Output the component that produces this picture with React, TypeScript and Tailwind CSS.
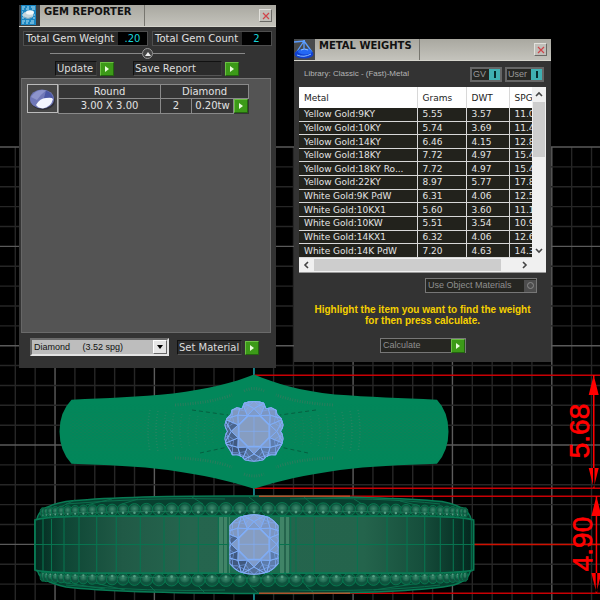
import React from "react";

const metals: [string, string, string, string][] = [
  ["Yellow Gold:9KY", "5.55", "3.57", "11.08"],
  ["Yellow Gold:10KY", "5.74", "3.69", "11.45"],
  ["Yellow Gold:14KY", "6.46", "4.15", "12.88"],
  ["Yellow Gold:18KY", "7.72", "4.97", "15.41"],
  ["Yellow Gold:18KY Ro...", "7.72", "4.97", "15.40"],
  ["Yellow Gold:22KY", "8.97", "5.77", "17.89"],
  ["White Gold:9K PdW", "6.31", "4.06", "12.58"],
  ["White Gold:10KX1", "5.60", "3.60", "11.17"],
  ["White Gold:10KW", "5.51", "3.54", "10.99"],
  ["White Gold:14KX1", "6.32", "4.06", "12.61"],
  ["White Gold:14K PdW", "7.20", "4.63", "14.37"],
];

const verdana = "font-['DejaVu_Sans',sans-serif]";
const arial = "font-['Liberation_Sans',sans-serif]";

/* ---------- viewport drawing ---------- */

const polar = (r: number, deg: number): [number, number] => [
  r * Math.cos((deg * Math.PI) / 180),
  r * Math.sin((deg * Math.PI) / 180),
];
const poly = (...p: [number, number][]) => p.map((q) => q.map((v) => v.toFixed(1)).join(",")).join(" ");

const ROUND_CLIP =
  "M-30-86Q0-96 30-86L37-69L52-72L68-64L70-52L82-40L89-20Q88-8 81 0Q88 8 89 22L84 40L70 62L66 72L50 72L37 77L28 87Q0 95-28 87L-37 77L-50 72L-66 72L-70 62L-84 40L-89 22Q-88 8-81 0Q-88-8-89-20L-82-40L-70-52L-68-64L-52-72L-37-69Z";
const BARREL_CLIP = "M-74-56Q-60-73-45-82Q0-99 45-82Q60-73 74-56V58Q60 75 45 83Q0 100-45 83Q-60 75-74 58Z";

function Gem({ id, cx, cy, outline }: { id: string; cx: number; cy: number; outline: string }) {
  const shades = ["#7e9ac6", "#5d7cab", "#55719b", "#40597f", "#4b658d", "#8098c0", "#87a3d4", "#7c96c2"];
  return (
    <g transform={`translate(${cx} ${cy}) scale(0.3333)`}>
      <clipPath id={id}>
        <path d={outline} />
      </clipPath>
      <g clipPath={`url(#${id})`} stroke="#80aef8" strokeWidth="3" strokeLinejoin="round">
        <path d={outline} fill="#6985b4" />
        {shades.map((fill, k) => {
          const a = k * 45;
          const t0 = polar(51, a - 22.5);
          const t1 = polar(51, a + 22.5);
          const star = polar(68, a);
          const g0 = polar(96, a - 22.5);
          const g1 = polar(96, a + 22.5);
          const gm = polar(96, a);
          return (
            <g key={k}>
              <polygon points={poly(star, g0, gm, g1)} fill={fill} />
              <polygon points={poly(t0, star, g0)} fill={fill} />
              <polygon points={poly(t1, star, g1)} fill={fill} />
              <polygon points={poly(t0, star, t1)} fill="#7f9bc9" />
              <polyline
                points={poly(polar(80, a - 22.5), polar(81, a - 8), polar(96, a + 3))}
                fill="none"
                strokeWidth="2"
              />
              <polyline
                points={poly(polar(80, a + 22.5), polar(81, a + 8), polar(96, a - 3))}
                fill="none"
                strokeWidth="2"
              />
              <polyline
                points={poly(polar(66, a - 22), polar(76, a - 12), polar(96, a - 10))}
                fill="none"
                strokeWidth="1.5"
              />
              <polyline
                points={poly(polar(66, a + 22), polar(76, a + 12), polar(96, a + 10))}
                fill="none"
                strokeWidth="1.5"
              />
            </g>
          );
        })}
        <polygon
          points={poly(...([0, 1, 2, 3, 4, 5, 6, 7].map((k) => polar(49, k * 45 + 22.5)) as [number, number][]))}
          fill="#869dc1"
          strokeWidth="4"
        />
        <path d="M-46 0H46M0-46V46" strokeWidth="2" />
        <path d={outline} fill="none" strokeWidth="6" />
      </g>
    </g>
  );
}

function BeadRow({ y, dir }: { y: number; dir: 1 | -1 }) {
  const beads = [];
  for (let i = -21; i <= 21; i++) {
    const th = i * 0.0655;
    const s = Math.cos(th);
    const cx = 254 + 215 * Math.sin(th);
    const cy = y + dir * 4 * (1 - s);
    beads.push(
      <g key={i}>
        <ellipse cx={cx} cy={cy} rx={2 + 5 * s} ry={4 + 2.5 * s} fill="#0f543e" stroke="#077a50" strokeWidth="0.9" />
        <ellipse cx={cx} cy={cy - 1} rx={1 + 4 * s} ry={2 + 2 * s} fill="url(#bead)" />
        <path d={`M${cx - 7 * s} ${cy + dir * 2}h${14 * s}`} stroke="#2a7f61" strokeWidth="1" opacity="0.7" />
        <circle cx={cx} cy={cy + dir * 3} r={0.6 + 0.8 * s} fill="#56a085" />
      </g>
    );
  }
  return <g>{beads}</g>;
}

const range = (n: number) => Array.from({ length: n }, (_, i) => i);

function Viewport() {
  const bandLines = [
    43, 51.5, 64, 79, 96.7, 116.3, 140.3, 164, 179.3, 198.3, 218.3, 290.7, 296, 314.3, 357.3, 387, 407, 424.7, 440.3,
    453.3, 463.3, 471.3,
  ];
  return (
    <svg
      className="absolute inset-0 h-full w-full"
      viewBox="0 0 600 600"
      preserveAspectRatio="xMinYMin slice"
      role="img"
      aria-label="Ring model, top and front views"
    >
      <defs>
        <linearGradient id="band">
          <stop offset="0" stopColor="#04291f" />
          <stop offset="0.06" stopColor="#0d4534" />
          <stop offset="0.2" stopColor="#205a46" />
          <stop offset="0.35" stopColor="#25654e" />
          <stop offset="0.75" stopColor="#24644c" />
          <stop offset="0.88" stopColor="#164f3c" />
          <stop offset="1" stopColor="#03271e" />
        </linearGradient>
        <radialGradient id="bead">
          <stop offset="0" stopColor="#3f8a6e" />
          <stop offset="1" stopColor="#17624a" />
        </radialGradient>
        <pattern id="weave" width="4" height="3" patternUnits="userSpaceOnUse">
          <path d="M0 .5h2M2 2h2" stroke="#1d7a56" strokeWidth="0.6" />
        </pattern>
        <linearGradient id="fade" x1="0" x2="0" y1="0" y2="1">
          <stop offset="0" stopColor="#fff" stopOpacity="0" />
          <stop offset="0.4" stopColor="#fff" />
          <stop offset="1" stopColor="#fff" stopOpacity="0" />
        </linearGradient>
        <mask id="weaveMask">
          <rect x="70" y="404" width="370" height="56" fill="url(#fade)" />
        </mask>
      </defs>
      <rect width="600" height="600" fill="#000" />
      {range(30).map((i) => {
        const x = 15.3 + i * 19.87;
        return <path key={i} d={`M${x} 147V600`} stroke={i % 5 === 2 ? "#5c5c5c" : "#262626"} strokeWidth="1.4" />;
      })}
      {range(23).map((i) => {
        const y = 147 + i * 19.87;
        return <path key={i} d={`M0 ${y}H600`} stroke={i % 5 === 0 ? "#5a5a5a" : "#262626"} strokeWidth="1.4" />;
      })}
      <path d="M254 366V600" stroke="#0b8b93" strokeWidth="1.6" />
      <path d="M254 375.3H600M254 488.3H600M254 496.3H600M254 593.3H600" stroke="#c80004" strokeWidth="1.4" />
      <path d="M472 544.5H600" stroke="#d01000" strokeWidth="1.6" />

      {/* ring, top view */}
      <path
        d="M254 374.5C275 383 300 391 335 394.5C370 397 400 398 437 399.7Q448.500 412 448.500 431.500T437 463.700C400 465 370 466 340 470C305 475 278 481 254 488.700C230 481 203 475 168 470C138 466 108 465 71.500 463.700Q59.500 451 59.500 431.500T71.500 399.700C108 398 138 397 173 393.500C208 389 233 383 254 374.500Z"
        fill="#02875a"
      />
      <rect x="70" y="404" width="370" height="56" fill="url(#weave)" mask="url(#weaveMask)" />
      {range(9).map((i) => (
        <g key={i} stroke="#2b8664" fill="none" strokeWidth="1.6" strokeDasharray="1 2" opacity={0.8 - i * 0.06}>
          <path d={`M${150 + i * 8} ${410 + i}q-4 20 0 ${42 - i * 2}`} />
          <path d={`M${358 - i * 8} ${410 + i}q4 20 0 ${42 - i * 2}`} />
        </g>
      ))}
      <g stroke="#327c5e" fill="none" strokeWidth="3" strokeDasharray="1 1.5" opacity="0.8">
        <path d="M175 405Q210 403 232 395M333 405Q298 403 276 395M175 458Q210 459 232 467M333 458Q298 459 276 467M244 391Q254 386 264 391M244 474Q254 478 264 474" />
      </g>
      <path
        d="M192 410L228 415M316 410L280 415M200 453L228 447M308 453L280 447"
        stroke="#055f40"
        strokeDasharray="4 3"
        fill="none"
      />
      <Gem id="gemTop" cx={254} cy={431.3} outline={ROUND_CLIP} />

      {/* ring, front view */}
      <path
        d="M37 519Q39 506 66 501.500Q120 495.500 254 496T442 501.500Q469 507 471 519L473.500 521V569L470 572Q467 584 443 587Q390 594 254 593.500T66 587Q40 581 38 572L35 569V521Z"
        fill="#07402f"
        stroke="#087b54"
        strokeWidth="1.4"
      />
      <path
        d="M75 500L52 511M112 499L86 505M138 499L122 504M192 497L203 504M249 497L258 504M304 497L312 504M354 499L362 504M400 501L420 506M60 582L105 589M95 583L125 590M150 586L156 592M198 586L205 593M250 586L258 593M306 586L314 593M374 590L420 583M66 504Q150 497 225 499M290 499Q380 497 440 504M66 585Q150 592 225 590M290 590Q380 592 440 585"
        stroke="#0b6e4c"
        fill="none"
      />
      <BeadRow y={509} dir={1} />
      <BeadRow y={580} dir={-1} />
      <path
        d="M35 520Q45 516.500 96 516.200H412Q462 516.500 473.500 520V570Q462 573 412 573.200H96Q45 573 35 570Z"
        fill="url(#band)"
        stroke="#087b54"
        strokeWidth="1.8"
      />
      <rect x="227" y="517" width="54" height="56" fill="#1c6c4e" />
      <path d="M219 517h4v56h-4zM224 517h3v56h-3zM229 517h1v56h-1zM280 517h4v56h-4zM286 517h3v56h-3z" fill="#408467" />
      <path
        d={bandLines.map((x) => `M${x} ${x < 60 || x > 450 ? 519 : 517}V${x < 60 || x > 450 ? 571 : 573}`).join("") + "M35 544.500H473"}
        stroke="#08734f"
        strokeWidth="1.1"
      />
      <Gem id="gemFront" cx={254} cy={544.3} outline={BARREL_CLIP} />
      <path d="M259 496.300H350M259 593.300H350" stroke="#b0522c" strokeWidth="1.4" />

      {/* dimensions */}
      <g fill="#f00">
        <path d="M593 375h1.500v113h-1.500zM593.700 375l5 20h-10zM593.700 488l5-20h-10z" />
        <path d="M595.700 496h1.500v97h-1.500zM596.400 496l5 20h-10zM596.400 593l5-20h-10z" />
        <g
          className="font-['Liberation_Sans',sans-serif]"
          fontSize="28"
          textAnchor="middle"
          stroke="#f00"
          strokeWidth="0.6"
        >
          <text transform="translate(589 431) rotate(-90)">5.68</text>
          <text transform="translate(592 544) rotate(-90)">4.90</text>
        </g>
      </g>
    </svg>
  );
}

/* ---------- window parts ---------- */

function TitleBar({ title, icon }: { title: string; icon: React.ReactNode }) {
  return (
    <header className="flex h-[22px] border-b border-[#d6d5cd] bg-linear-to-b from-[#a9a8a0] to-[#c4c3bc]">
      <div className="h-[21px] w-[21px] shrink-0 overflow-hidden">{icon}</div>
      <h1
        className={`w-[105px] shrink-0 border-r border-[#77766f] pl-1 text-[10px] leading-[13px] font-bold whitespace-nowrap text-[#111] ${verdana}`}
      >
        {title}
      </h1>
      <button
        type="button"
        aria-label={`Close ${title}`}
        className="mt-1 mr-1 ml-auto flex h-[13px] w-[13px] items-center justify-center border border-t-[#e2e1dc] border-r-[#6b6a66] border-b-[#6b6a66] border-l-[#e2e1dc] bg-[#c0bfb9]"
      >
        <svg viewBox="0 0 8 8" className="h-[8px] w-[8px]">
          <path d="M1 1l6 6M7 1L1 7" stroke="#d0444a" strokeWidth="1.2" />
        </svg>
      </button>
    </header>
  );
}

function Play() {
  return (
    <span className="flex h-[14px] w-[14px] shrink-0 items-center justify-center border border-t-[#6cbf45] border-r-[#23650f] border-b-[#23650f] border-l-[#6cbf45] bg-[#3c9a18]">
      <svg viewBox="0 0 4 6" className="h-[6px] w-[4px]">
        <path d="M0 0l4 3l-4 3z" fill="#e9fbdc" />
      </svg>
    </span>
  );
}

function ActionButton({ label, width }: { label: string; width: string }) {
  return (
    <button type="button" className="flex items-center gap-[3px]">
      <span
        className={`h-[15px] border border-t-[#111] border-r-[#3a3a3a] border-b-[#555] border-l-[#111] bg-[#2b2b2b] pl-px text-left text-[10px] leading-[13px] whitespace-nowrap text-[#dcdcdc] ${width}`}
      >
        {label}
      </span>
      <Play />
    </button>
  );
}

function Readout({ label, value, width }: { label: string; value: string; width: string }) {
  return (
    <div className={`flex h-[15px] border border-[#4e4e4e] bg-[#2a2a2a] text-[10px] leading-[13px] ${width}`}>
      <span className="flex-1 pl-[2px] whitespace-nowrap text-[#e0e0e0]">{label}</span>
      <output className="w-[29px] bg-black text-center text-[#19d3d8]">{value}</output>
    </div>
  );
}

function GemReporter() {
  return (
    <section className={`absolute top-[5px] left-[19px] w-[257px] bg-[#333] ${verdana}`}>
      <TitleBar
        title="GEM REPORTER"
        icon={
          <svg viewBox="0 0 21 21">
            <rect width="21" height="21" fill="#3a3c3e" />
            <rect x="2" width="15" height="20" fill="#1b86c2" />
            <path
              d="M3 2h3M8 2h2M12 2h4M3 4h2M7 4h3M13 4h3M3 7h1M3 10h1M15 10h1M3 13h2M14 13h2M3 16h3M7 16h3M12 16h3M3 18h2M7 18h2M11 18h4"
              stroke="#b8e2f2"
              strokeWidth="1"
            />
            <ellipse cx="9" cy="10" rx="5.500" ry="3.500" fill="#c3d5dc" />
            <ellipse cx="11" cy="7.500" rx="4" ry="2.200" fill="#f2f8fa" />
            <path d="M5 12q4 3 8 0" stroke="#7fa9bd" fill="none" />
          </svg>
        }
      />
      <div className="mx-1 mt-[4px] flex justify-between">
        <Readout label="Total Gem Weight" value=".20" width="w-[125px]" />
        <Readout label="Total Gem Count" value="2" width="w-[120px]" />
      </div>
      <div className="mr-[31px] ml-[31px] flex h-[15px] items-center">
        <span className="h-px flex-1 bg-[#888]" />
        <button
          type="button"
          aria-label="Collapse summary"
          className="flex h-[11px] w-[11px] items-center justify-center rounded-full border border-[#999] bg-[#444]"
        >
          <svg viewBox="0 0 6 4" className="h-[4px] w-[6px]">
            <path d="M0 4l3-4l3 4z" fill="#eee" />
          </svg>
        </button>
        <span className="h-px flex-1 bg-[#888]" />
      </div>
      <div className="flex gap-[19px] pl-[36px]">
        <ActionButton label="Update" width="w-[42px]" />
        <ActionButton label="Save Report" width="w-[89px]" />
      </div>
      <div className="mt-[2px] mr-[5px] ml-[2px] h-[255px] border border-t-[#777] border-r-[#6a6a6a] border-b-[#6a6a6a] border-l-[#666] bg-[#545454] p-[5px]">
        <div className="flex text-[10px] text-[#e2e2e2]">
          <div className="h-[29px] w-[31px] shrink-0 border border-[#bbb] bg-[#464646]">
            <svg viewBox="0 0 29 27">
              <ellipse cx="15" cy="16" rx="12" ry="9" fill="#2f2f36" />
              <ellipse cx="14" cy="14" rx="12" ry="9.500" fill="#7078b8" />
              <path d="M3 12Q9 3 18 5.500Q12 10 9 15z" fill="#8d94cc" />
              <path d="M18 5.500Q25 8 25 14L16 13z" fill="#4c58a4" />
              <path d="M8 20Q12 13 18 13Q24 12 25 14Q23 22 15 23.500Q10 23 8 20z" fill="#f4f6ff" />
            </svg>
          </div>
          <table className="w-[190px] table-fixed border-collapse bg-[#353535] text-center leading-[13px]">
            <colgroup>
              <col className="w-[102px]" />
              <col className="w-[31px]" />
              <col className="w-[42px]" />
              <col className="w-[15px]" />
            </colgroup>
            <tbody>
              <tr>
                <th className="border border-[#8a8a8a] p-0 font-normal">Round</th>
                <th colSpan={3} className="border border-[#8a8a8a] p-0 font-normal">
                  Diamond
                </th>
              </tr>
              <tr>
                <td className="border border-[#8a8a8a] p-0">3.00 X 3.00</td>
                <td className="border border-[#8a8a8a] p-0">2</td>
                <td className="border border-[#8a8a8a] p-0 whitespace-nowrap">0.20tw</td>
                <td className="p-0">
                  <button type="button" aria-label="Select gem" className="block">
                    <Play />
                  </button>
                </td>
              </tr>
            </tbody>
          </table>
        </div>
      </div>
      <div className="flex h-[35px] items-start gap-[8px] pt-[5px] pl-[11px]">
        <div className="relative flex">
          <select
            aria-label="Material"
            className={`h-[18px] w-[139px] appearance-none rounded-none border-2 border-t-[#6a6a6a] border-r-[#e4e4e4] border-b-[#e4e4e4] border-l-[#6a6a6a] bg-[#bdbdbd] pr-4 pl-[2px] text-[9px] leading-[14px] text-[#111] ${arial}`}
          >
            <option>{"Diamond\u00a0\u00a0\u00a0\u00a0\u00a0(3.52 spg)"}</option>
          </select>
          <span className="pointer-events-none absolute top-[2px] right-[2px] flex h-[14px] w-[14px] items-center justify-center border border-t-white border-r-[#666] border-b-[#666] border-l-white bg-[#e6e6e6]">
            <svg viewBox="0 0 6 4" className="h-[4px] w-[6px]">
              <path d="M0 0h6L3 4z" fill="#000" />
            </svg>
          </span>
        </div>
        <div className="pt-[2px]">
          <ActionButton label="Set Material" width="w-[65px]" />
        </div>
      </div>
    </section>
  );
}

function Toggle({ label, width }: { label: string; width: string }) {
  return (
    <label className={`flex h-[15px] items-center border-2 border-[#666] bg-[#262622] pl-px ${width}`}>
      <span className="flex-1 text-[9px] leading-[11px] text-[#999]">{label}</span>
      <span className="relative flex h-[11px] w-[11px] items-center justify-center bg-[#3fb0b2]">
        <input type="checkbox" defaultChecked className="absolute inset-0 m-0 h-full w-full appearance-none" />
        <span className="h-[7px] w-[2px] bg-[#062a2c]" />
      </span>
    </label>
  );
}

function Chevron({ d }: { d: string }) {
  return (
    <svg viewBox="0 0 8 8" className="h-[8px] w-[8px]">
      <path d={d} fill="none" stroke="#444" strokeWidth="1.6" />
    </svg>
  );
}

function MetalWeights() {
  const cell = "border-r border-[#d8d8d8] p-0 pl-[5px] text-left whitespace-nowrap";
  return (
    <section
      className={`absolute top-[39px] left-[294px] flex h-[323px] w-[257px] flex-col bg-[#333] ${arial}`}
    >
      <TitleBar
        title="METAL WEIGHTS"
        icon={
          <svg viewBox="0 0 21 21">
            <rect width="21" height="21" fill="#484a4c" />
            <path d="M0 3L11 2M10 1v9M10 2L2 14M10 2L18 13" stroke="#5a9cff" strokeWidth="1.300" fill="none" />
            <ellipse cx="10" cy="15" rx="9.500" ry="4.500" fill="#1040d0" />
            <ellipse cx="11" cy="12.500" rx="7" ry="3" fill="#2468f4" />
            <path d="M3 16q7 3 14-1M7 11q3-2 7 0" stroke="#8cc0ff" fill="none" />
          </svg>
        }
      />
      <div className="flex h-[26px] items-center gap-[3px] pr-[7px] pl-[10px]">
        <p className="flex-1 text-[8px] whitespace-nowrap text-[#b4b4b4]">Library: Classic - (Fast)-Metal</p>
        <Toggle label="GV" width="w-[32px]" />
        <Toggle label="User" width="w-[39px]" />
      </div>
      <div className="mr-[5px] ml-[5px] border-b border-[#999] bg-[#f0f0f0]">
        <div className="flex">
          <div className="h-[171px] flex-1 overflow-x-auto overflow-y-hidden bg-[#22221c] [scrollbar-width:none]">
            <table className={`h-[171px] w-[270px] table-fixed border-collapse text-[9px] leading-3 ${verdana}`}>
              <colgroup>
                <col className="w-[118px]" />
                <col className="w-[49px]" />
                <col className="w-[43px]" />
                <col className="w-[60px]" />
              </colgroup>
              <thead>
                <tr className="h-[21px] bg-white text-[#222]">
                  {["Metal", "Grams", "DWT", "SPG"].map((h) => (
                    <th key={h} className={`${cell} font-normal`}>
                      {h}
                    </th>
                  ))}
                </tr>
              </thead>
              <tbody>
                {metals.map((row) => (
                  <tr key={row[0]} className="border-b border-[#d8d8d8] text-[#e4e4e4]">
                    {row.map((v, i) => (
                      <td key={i} className={cell}>
                        {v}
                      </td>
                    ))}
                  </tr>
                ))}
              </tbody>
            </table>
          </div>
          <div className="flex w-[14px] flex-col items-center justify-between py-[3px]">
            <Chevron d="M1 6l3-3l3 3" />
            <div className="mt-[4px] mb-auto h-[55px] w-[12px] bg-[#cdcdcd]" />
            <Chevron d="M1 2l3 3l3-3" />
          </div>
        </div>
        <div className="flex h-[14px] items-center px-[3px]">
          <Chevron d="M6 1l-3 3l3 3" />
          <div className="mr-[20px] ml-[4px] h-[12px] flex-1 bg-[#cdcdcd]" />
          <Chevron d="M2 1l3 3l-3 3" />
          <div className="w-[14px]" />
        </div>
      </div>
      <label className="mt-[5px] mr-[14px] flex h-[15px] w-[112px] items-center self-end border border-[#777] bg-[#262622] pl-[2px]">
        <span className="flex-1 text-[9px] leading-[13px] whitespace-nowrap text-[#8f8f8f]">Use Object Materials</span>
        <span className="flex h-[12px] w-[12px] items-center justify-center bg-[#4d4d4d]">
          <input type="checkbox" className="m-0 h-[7px] w-[7px] appearance-none rounded-full border border-[#8a8a8a]" />
        </span>
      </label>
      <p className="mt-[11px] text-center text-[10px] leading-[11px] font-bold text-[#f5d000]">
        Highlight the item you want to find the weight
        <br />
        for then press calculate.
      </p>
      <button
        type="button"
        className="mt-[12px] ml-[86px] flex h-[15px] w-[86px] items-center border border-[#777] bg-[#262622] pl-[2px] text-[9px] text-[#8f8f8f]"
      >
        <span className="flex-1 text-left">Calculate</span>
        <Play />
      </button>
    </section>
  );
}

export default function App() {
  return (
    <main className="relative min-h-screen overflow-hidden bg-black">
      <Viewport />
      <GemReporter />
      <MetalWeights />
    </main>
  );
}
